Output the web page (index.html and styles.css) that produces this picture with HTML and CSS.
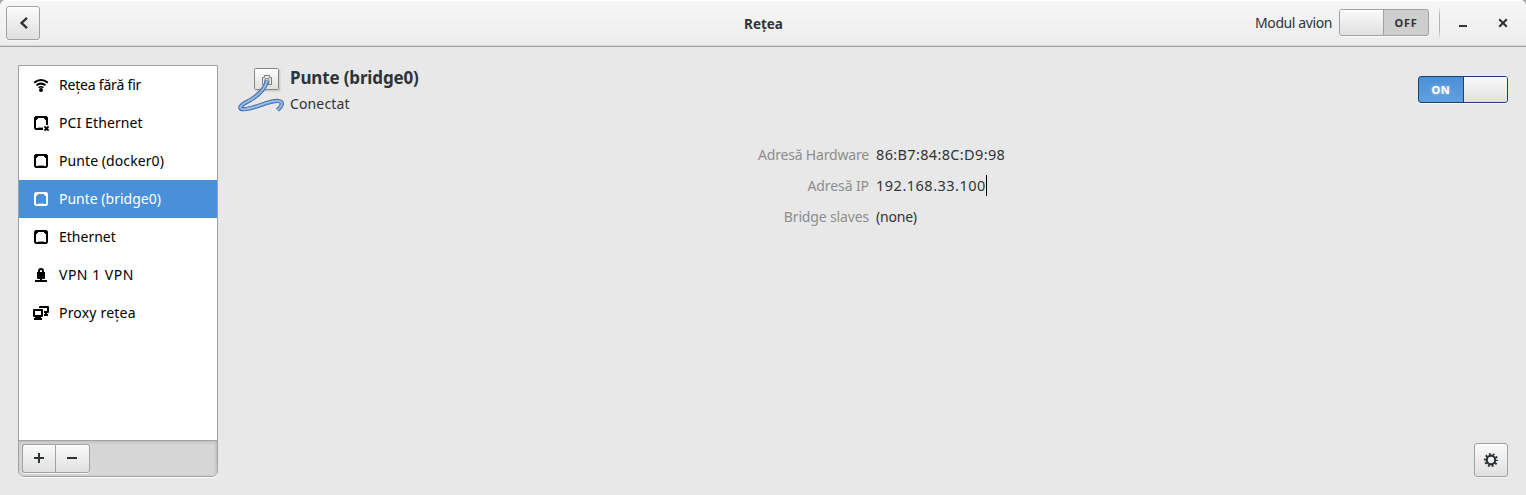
FILE: index.html
```html
<!DOCTYPE html>
<html lang="ro">
<head>
<meta charset="utf-8">
<title>Rețea</title>
<link rel="stylesheet" href="styles.css">
</head>
<body>
<svg class="defs" width="0" height="0">
  <symbol id="port" viewBox="0 0 16 16"><path fill-rule="evenodd" d="M2.500 1h11L15 2.500v11L13.500 15h-11L1 13.500v-11zM5 3v1H4v1H3v8h10V5h-1V4h-1V3z"/><path opacity=".4" d="M5 12h6v1H5z"/></symbol>
</svg>
<div class="window">
  <header class="titlebar">
    <button class="button back"><svg width="16" height="16" viewBox="0 0 16 16"><path d="M12 2.800 6.600 8l5.400 5.200" fill="none" stroke="currentColor" stroke-width="2.400"/></svg></button>
    <h1 class="title"><span class="t-title">Rețea</span></h1>
    <div class="controls">
      <span class="airplane t-air">Modul avion</span>
      <div class="switch off"><span class="knob"></span><span class="state">OFF</span></div>
      <span class="separator"></span>
      <svg class="win-min" width="16" height="16" viewBox="0 0 16 16"><path d="M4 10h8v2H4z"/></svg>
      <svg class="win-close" width="16" height="16" viewBox="0 0 16 16"><path d="m4.200 4.200 7.600 7.600m0-7.600-7.600 7.600" fill="none" stroke="currentColor" stroke-width="2.100"/></svg>
    </div>
  </header>
  <main class="content">
    <aside class="sidebar">
      <ul class="devices">
        <li><svg viewBox="0 0 16 16"><g fill="none" stroke="currentColor" stroke-width="2"><path d="M1.200 5.600q6.800-5.200 13.600 0"/><path d="M3.500 8.300q4.500-3.400 9 0"/><path d="M5.500 10.700q2.500-1.900 5 0" stroke-width="1.500"/></g><circle cx="8" cy="13" r="2"/></svg><span class="t-wifi">Rețea fără fir</span></li>
        <li><svg viewBox="0 0 16 16"><path d="M2.500 1h11L15 2.500V10h-2V5h-1V4h-1V3H5v1H4v1H3v8h7v2H2.500L1 13.500v-11z"/><path opacity=".4" d="M5 12h5v1H5z"/><path d="m11.400 11.400 4.200 4.200m0-4.200-4.200 4.200" stroke="currentColor" stroke-width="1.900"/></svg><span class="t-pci">PCI Ethernet</span></li>
        <li><svg><use href="#port"/></svg><span class="t-docker">Punte (docker0)</span></li>
        <li class="selected"><svg><use href="#port"/></svg><span class="t-bridge">Punte (bridge0)</span></li>
        <li><svg><use href="#port"/></svg><span class="t-eth">Ethernet</span></li>
        <li><svg viewBox="0 0 16 16"><path fill-rule="evenodd" d="M5 5V4q0-3 3-3t3 3v1h1v6q0 1-1 1H9v1h5v2H2v-2h5v-1H5q-1 0-1-1V5zm2 0h2V4q0-1-1-1t-1 1z"/></svg><span class="t-vpn">VPN 1 VPN</span></li>
        <li><svg viewBox="0 0 16 16"><path fill-rule="evenodd" d="M1 4h8q1 0 1 1v6q0 1-1 1H8v1h1v2H1v-2h1v-1H1q-1 0-1-1V5q0-1 1-1zm1 2v4h6V6z"/><path d="M6 3V2q0-1 1-1h8q1 0 1 1v5q0 1-1 1h-1v1h1v2h-4V9h1V8h-1V6h3V3z"/></svg><span class="t-proxy">Proxy rețea</span></li>
      </ul>
      <div class="toolbar">
        <button class="button add"><svg width="16" height="16" viewBox="0 0 16 16"><path d="M7 3h2v4h4v2H9v4H7V9H3V7h4z"/></svg></button><button class="button remove"><svg width="16" height="16" viewBox="0 0 16 16"><path d="M3 7h10v2H3z"/></svg></button>
      </div>
    </aside>
    <section class="panel">
      <div class="heading">
        <svg class="cable" width="48" height="48" viewBox="0 0 48 48">
          <defs><linearGradient id="plate" x2="0" y2="1"><stop stop-color="#fff"/><stop offset="1" stop-color="#dedfdc"/></linearGradient></defs>
          <rect x="19" y="4.500" width="25.500" height="22" rx="1.500" fill="#aaa" opacity=".45"/>
          <rect x="18.500" y="3.500" width="24" height="21" rx="1" fill="url(#plate)" stroke="#858783"/>
          <path d="M26.500 19.500v-7h2v-2h5v2h2v7z" fill="#eee" stroke="#777a75"/>
          <path d="M29 13.500h4v5h-4z" fill="#d2d4d0" stroke="#888"/>
          <g fill="none">
            <path d="M31 15.500C29 26 19 33 8 38.500c-6 4-4 6.500 2.500 5.500 12-2 24-9 32-8 5.500 1 3.500 5-1 9" stroke="#3465a4" stroke-width="4.200"/>
            <path d="M31 15.500C29 26 19 33 8 38.500c-6 4-4 6.500 2.500 5.500 12-2 24-9 32-8 5.500 1 3.500 5-1 9" stroke="#729fcf" stroke-width="2.800"/>
            <path d="M31 15.500C29 26 19 33 8 38.500c-6 4-4 6.500 2.500 5.500 12-2 24-9 32-8 5.500 1 3.500 5-1 9" stroke="#b4cbe7" stroke-width="1"/>
          </g>
        </svg>
        <div class="names"><h2><span class="t-name">Punte (bridge0)</span></h2><p><span class="t-status">Conectat</span></p></div>
        <div class="switch on"><span class="state">ON</span><span class="knob"></span></div>
      </div>
      <dl class="details">
        <dt><span class="t-hw">Adresă Hardware</span></dt><dd><span class="t-mac">86:B7:84:8C:D9:98</span></dd>
        <dt><span class="t-ipl">Adresă IP</span></dt><dd><span class="t-ip">192.168.33.100</span><i class="caret"></i></dd>
        <dt><span class="t-sl">Bridge slaves</span></dt><dd><span class="t-none">(none)</span></dd>
      </dl>
      <button class="button settings"><svg width="16" height="16" viewBox="0 0 16 16"><g fill="none" stroke="currentColor"><circle cx="8" cy="8" r="4.300" stroke-width="2.300"/><circle cx="8" cy="8" r="6" stroke-width="2.200" stroke-dasharray="1.770 2" stroke-dashoffset=".88"/></g></svg></button>
    </section>
  </main>
</div>
</body>
</html>
```
FILE: styles.css
```css
* { box-sizing: border-box; margin: 0; padding: 0; }
body { background: #a8a8a8; color: #2e3436; font: 14px/20px "Noto Sans", "Open Sans", sans-serif; }
svg { display: block; fill: currentColor; flex: none; }
span { white-space: nowrap; }
.defs { position: absolute; }
.window { height: 495px; display: flex; flex-direction: column; background: #e8e8e8; border-radius: 6px 6px 0 0; overflow: hidden; }
.titlebar { height: 47px; flex: none; display: grid; grid-template-columns: 1fr auto 1fr; align-items: center; padding: 0 15px 0 6px; border-bottom: 1px solid #a1a1a1; background: linear-gradient(#f7f7f7, #ececec); box-shadow: inset 0 1px #fff, inset 0 -1px #d7d7d7; }
.title { font-size: 13.500px; line-height: 20px; padding-top: 2px; padding-left: 10px; }
.controls { display: flex; align-items: center; justify-content: flex-end; }
.airplane { margin-right: 7px; }
.button { display: flex; align-items: center; justify-content: center; color: #2e3436; border: 1px solid #a1a1a1; border-radius: 3px; background: linear-gradient(#fafafa, #e0e0e0); box-shadow: inset 0 1px #fff, 0 1px #f5f5f5; }
.back { width: 34px; height: 34px; }
.switch { display: flex; width: 90px; height: 27px; border: 1px solid #a1a1a1; border-radius: 3px; font-size: 11px; font-weight: 700; line-height: 25px; box-shadow: 0 1px #fafafa; }
.knob { width: 44px; background: linear-gradient(#fafafa, #e0e0e0); box-shadow: inset 0 1px #fff; }
.state { flex: 1; text-align: center; }
.off { background: #cecece; margin-top: -1px; }
.off .knob { border-right: 1px solid #a1a1a1; border-radius: 2px 0 0 2px; }
.off .state { letter-spacing: .7px; }
.on { background: linear-gradient(#4a90d9, #629fde); border-color: #184472; color: #fff; margin: 11px 0 0 auto; }
.on .knob { border-left: 1px solid #184472; border-radius: 0 2px 2px 0; }
.on .state { text-shadow: 0 0 3px #fff9; letter-spacing: .6px; }
.separator { width: 1px; height: 34px; margin: 0 15px 0 10px; background: linear-gradient(transparent, #b0b0b0 30%, #b0b0b0 70%, transparent); }
.win-close { margin-left: 24px; }
.content { flex: 1; display: flex; padding: 18px; }
.sidebar { width: 200px; height: 412px; display: flex; flex-direction: column; border: 1px solid #a1a1a1; border-radius: 0 0 6px 6px; overflow: hidden; box-shadow: 0 1px #fff; }
.devices { flex: 1; background: #fff; color: #000; list-style: none; }
.devices li { height: 38px; display: flex; align-items: center; gap: 10px; padding-left: 14px; }
.devices svg { width: 16px; height: 16px; }
.devices .selected { background: #4a90d9; color: #fff; }
.toolbar { height: 36px; display: flex; padding: 3px; border-top: 1px solid #a1a1a1; background: #d6d6d6; box-shadow: inset 0 2px 3px #0001, inset -2px 0 3px #0001; }
.toolbar .button { height: 29px; padding-bottom: 1px; }
.add { width: 33px; border-radius: 3px 0 0 3px; border-right: 0; }
.remove { width: 35px; border-radius: 0 3px 3px 0; }
.remove svg { margin-right: 1px; }
.panel { flex: 1; display: flex; flex-direction: column; padding-left: 18px; }
.heading { display: flex; align-items: flex-start; height: 49px; }
.names { padding: 1px 0 0 6px; }
.names h2 { font-size: 17px; line-height: 24px; }
.names p { padding-top: 4px; }
.details { display: grid; grid-template-columns: 633px 1fr; column-gap: 7px; row-gap: 11px; padding-top: 31px; }
.details dt { text-align: right; color: #8b8e8f; }
.details dd { display: flex; height: 20px; }
.caret { width: 1px; height: 21px; background: #000; margin-top: -1px; margin-bottom: -1px; }
.settings { width: 34px; height: 34px; margin: auto 0 0 auto; }

/* Per-label tracking */
.t-air { letter-spacing: -.4px; }
.t-wifi { letter-spacing: -.2px; }
.t-pci { letter-spacing: .1px; }
.t-docker { letter-spacing: .08px; }
.t-vpn { letter-spacing: .5px; }
.t-proxy { letter-spacing: .2px; }
.t-name { letter-spacing: -.15px; }
.t-status { letter-spacing: .13px; }
.t-hw { letter-spacing: -.18px; }
.t-ipl { letter-spacing: -.1px; }
.t-sl { letter-spacing: -.15px; }
.t-mac, .t-ip { font-size: 14.500px; line-height: 18px; }
.t-mac { letter-spacing: .35px; }
.t-ip { letter-spacing: .5px; }
.t-none { letter-spacing: -.2px; }
```
